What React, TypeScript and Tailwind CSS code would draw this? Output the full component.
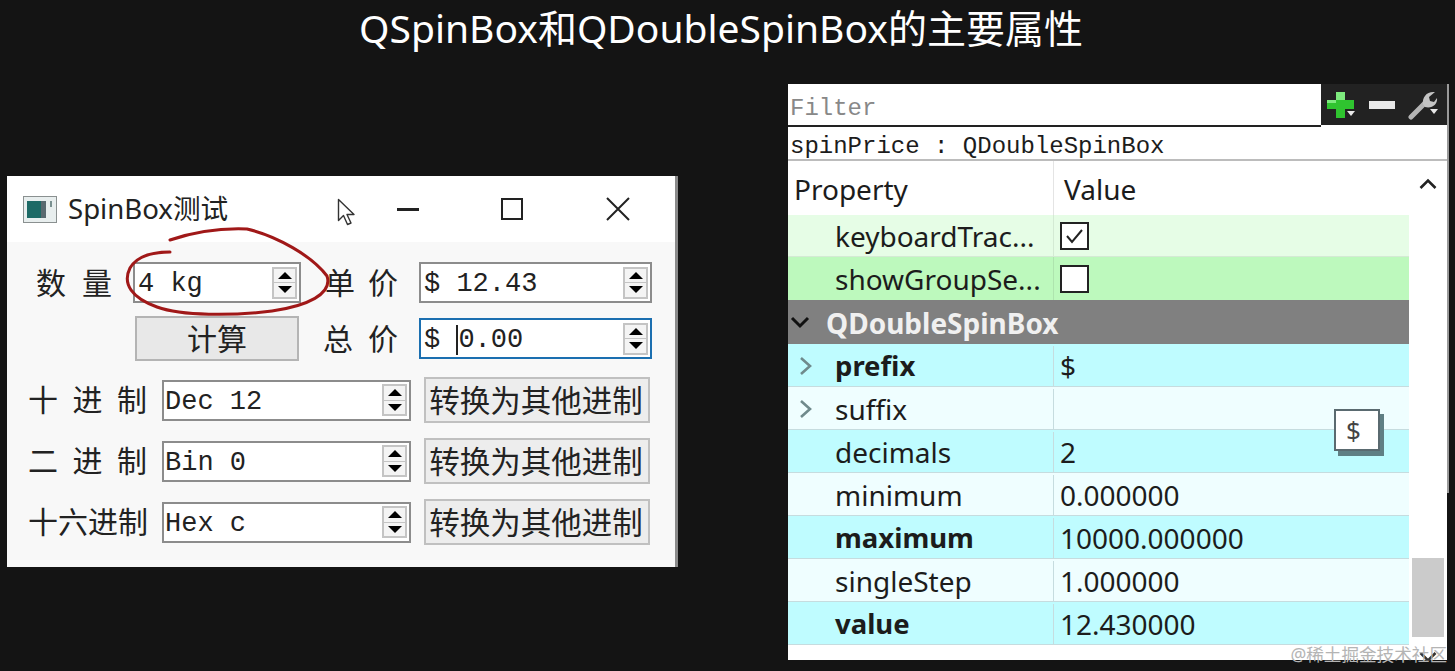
const sans = "font-['Noto_Sans','Noto_Sans_CJK_SC',sans-serif]";
const mono = "font-['Liberation_Mono','Noto_Sans_CJK_SC',monospace]";

type Row = {
  name: string;
  value?: string;
  bold?: boolean;
  arrow?: boolean;
  bg: string;
};

const rows: Row[] = [
  { name: "prefix", value: "$", bold: true, arrow: true, bg: "bg-[#bffcff]" },
  { name: "suffix", arrow: true, bg: "bg-[#effeff]" },
  { name: "decimals", value: "2", bg: "bg-[#bffcff]" },
  { name: "minimum", value: "0.000000", bg: "bg-[#effeff]" },
  { name: "maximum", value: "10000.000000", bold: true, bg: "bg-[#bffcff]" },
  { name: "singleStep", value: "1.000000", bg: "bg-[#effeff]" },
  { name: "value", value: "12.430000", bold: true, bg: "bg-[#bffcff]" },
];

function SpinArrows() {
  return (
    <div className="flex h-[32px] w-[25px] shrink-0 flex-col border-2 border-[#c4c4c4] bg-[#f4f4f4]">
      <div className="flex flex-1 items-center justify-center border-b border-[#c4c4c4]">
        <div className="h-0 w-0 border-x-[7px] border-b-[7px] border-x-transparent border-b-black" />
      </div>
      <div className="flex flex-1 items-center justify-center">
        <div className="h-0 w-0 border-x-[7px] border-t-[7px] border-x-transparent border-t-black" />
      </div>
    </div>
  );
}

function SpinBox({
  text,
  width,
  focused,
  caret,
  tight,
}: {
  text: string;
  width: string;
  focused?: boolean;
  caret?: boolean;
  tight?: boolean;
}) {
  return (
    <div
      className={`flex h-[41px] shrink-0 items-center justify-between border-2 bg-white pr-[2px] ${
        tight ? "pl-[1px]" : "pl-[3px]"
      } ${width} ${focused ? "border-[#1b6fb0]" : "border-[#8c8c8c]"}`}
    >
      <span className={`${mono} mt-[4px] whitespace-pre text-[27px] leading-none text-[#222]`}>
        {caret ? (
          <>
            {"$ "}
            <span className="border-l-2 border-[#222]">0</span>
            {".00"}
          </>
        ) : (
          text
        )}
      </span>
      <SpinArrows />
    </div>
  );
}

function SpacedLabel({ chars, width }: { chars: string[]; width: string }) {
  return (
    <div className={`flex shrink-0 justify-between text-[30px] leading-none text-[#222] ${width}`}>
      {chars.map((c, i) => (
        <span key={i}>{c}</span>
      ))}
    </div>
  );
}

function ConvertRow({ chars, text }: { chars: string[]; text: string }) {
  return (
    <div className="ml-[21px] flex h-[46px] items-center">
      <SpacedLabel chars={chars} width="w-[119px]" />
      <SpinBox text={text} width="ml-[15px] w-[249px]" tight />
      <button className="ml-[13px] h-[46px] w-[226px] whitespace-nowrap border-2 border-[#c0c0c0] bg-[#ededed] pr-[2px] text-[30.5px] leading-none text-[#222]">
        转换为其他进制
      </button>
    </div>
  );
}

function SpinWindow() {
  return (
    <div className={`${sans} relative ml-[7px] mt-[92px] h-[391px] w-[671px] shrink-0 border-r-[3px] border-[#8a8a8a] bg-white`}>
      <div className="flex h-[66px] items-center">
        <svg width="34" height="27" viewBox="0 0 34 27" className="ml-[16px] shrink-0">
          <rect x="0.5" y="0.5" width="33" height="26" fill="#e8eeee" stroke="#8a9090" />
          <rect x="4" y="5" width="14" height="17" fill="#1d6a66" />
          <rect x="18" y="5" width="5" height="17" fill="#5a6a70" />
          <rect x="27" y="5" width="2" height="6" fill="#7a9090" />
        </svg>
        <span className="ml-[11px] w-[262px] shrink-0 text-[27.6px] leading-none text-[#222]">SpinBox测试</span>
        <svg width="20" height="28" viewBox="0 0 20 28" className="ml-[7px] mt-[5px] shrink-0">
          <path d="M1.5 1.5v21l5-5 4 9 3.5-1.5-4-8.5h7z" fill="#fff" stroke="#333" strokeWidth="1.4" strokeLinejoin="round" />
        </svg>
        <div className="ml-[40px] h-[3px] w-[22px] shrink-0 bg-[#222]" />
        <div className="ml-[82px] h-[22px] w-[22px] shrink-0 border-2 border-[#222]" />
        <svg width="24" height="24" viewBox="0 0 24 24" className="ml-[83px] shrink-0">
          <path d="M1 1l22 22M23 1L1 23" stroke="#222" strokeWidth="2" />
        </svg>
      </div>

      <div className="flex h-[325px] flex-col bg-[#f8f8f8] pt-[20px]">
        <div className="flex h-[41px] items-center">
          <SpacedLabel chars={["数", "量"]} width="ml-[29px] w-[76px]" />
          <SpinBox text="4 kg" width="ml-[21px] w-[168px]" />
          <SpacedLabel chars={["单", "价"]} width="ml-[24px] w-[73px]" />
          <SpinBox text="$ 12.43" width="ml-[21px] w-[233px]" />
        </div>
        <div className="mt-[13px] flex h-[45px] items-center">
          <button className="ml-[128px] h-[45px] w-[164px] border-2 border-[#b4b4b4] bg-[#e8e8e8] text-[30px] leading-none text-[#222]">
            计算
          </button>
          <SpacedLabel chars={["总", "价"]} width="ml-[24px] w-[75px]" />
          <SpinBox text="$ 0.00" width="ml-[21px] w-[233px]" focused caret />
        </div>
        <div className="mt-[16px] flex flex-col gap-[15px]">
          <ConvertRow chars={["十", "进", "制"]} text="Dec 12" />
          <ConvertRow chars={["二", "进", "制"]} text="Bin 0" />
          <ConvertRow chars={["十", "六", "进", "制"]} text="Hex c" />
        </div>
      </div>

      {/* hand-drawn red circle around the quantity box */}
      <svg width="670" height="391" viewBox="0 0 670 391" fill="none" className="absolute left-0 top-0">
        <path
          d="M163 64C190 55 215 52 240 53C270 60 305 80 320 100C326 118 300 130 265 135C225 140 175 140 150 131C125 122 115 108 123 92C130 80 145 76 163 76"
          stroke="#a01818"
          strokeWidth="3"
          strokeLinecap="round"
        />
      </svg>
    </div>
  );
}

function ToolIcons() {
  return (
    <div className="flex h-[41px] w-[126px] shrink-0 items-center bg-[#222]">
      <svg width="30" height="28" viewBox="0 0 30 28" className="ml-[6px] shrink-0">
        <path d="M9 1h9v8h9v9h-9v9H9v-9H0V9h9z" fill="#2fc42f" />
        <path d="M9 1h9v8H9zM0 9h9v3H0z" fill="#7eea7e" />
        <path d="M20 20h8l-4 5z" fill="#e8e8e8" />
      </svg>
      <div className="ml-[12px] h-[8px] w-[26px] shrink-0 bg-[#e8e8e8]" />
      <div className="relative ml-[13px] h-[30px] w-[30px] shrink-0">
        <svg width="30" height="30" viewBox="0 0 30 30" fill="none">
          <path d="M3 27L17 13" stroke="#b4b4b4" strokeWidth="5" strokeLinecap="round" />
          <path d="M15 14C14 7 19 1 27 2L21 7l1 4 4 1 3-4c1 6-5 11-12 9z" fill="#c4c4c4" />
        </svg>
        <div className="absolute bottom-[6px] right-0 h-0 w-0 border-x-[4px] border-t-[5px] border-x-transparent border-t-[#e8e8e8]" />
      </div>
    </div>
  );
}

function PropertyPanel() {
  return (
    <div className={`${sans} relative ml-[110px] h-[576px] w-[659px] shrink-0 bg-white text-[#1c1c1c]`}>
      <div className="flex h-[41px]">
        <div className={`${mono} ml-[2px] flex h-[41px] w-[531px] shrink-0 items-center pt-[8px] text-[24px] leading-none text-[#888]`}>Filter</div>
        <ToolIcons />
      </div>
      <div className="h-[2px] w-[533px] bg-[#222]" />
      <div className={`${mono} flex h-[34px] items-center border-b-2 border-[#bcbcbc] pl-[2px] pt-[7px] text-[24px] leading-none`}>
        spinPrice : QDoubleSpinBox
      </div>

      <div className="flex">
        <div className="w-[621px] shrink-0">
          <div className="flex h-[54px] text-[28px] leading-none">
            <div className="flex w-[266px] shrink-0 items-center border-r border-[#e4e4e4] pl-[6px] pt-[2px]">Property</div>
            <div className="flex items-center pl-[10px] pt-[2px]">Value</div>
          </div>
          <div className="flex h-[42px] border-b border-[#d4ead4] bg-[#e6fde6] text-[28px] leading-none">
            <div className="flex w-[266px] shrink-0 items-center border-r border-[#d4ead4] pl-[47px]">keyboardTrac...</div>
            <div className="flex items-center pl-[6px]">
              <div className="flex h-[28px] w-[29px] items-center justify-center border-2 border-[#222] bg-white">
                <svg width="19" height="16" viewBox="0 0 19 16" fill="none">
                  <path d="M2 8l5 6L17 2" stroke="#222" strokeWidth="2" />
                </svg>
              </div>
            </div>
          </div>
          <div className="flex h-[43px] bg-[#bdf9bd] text-[28px] leading-none">
            <div className="flex w-[266px] shrink-0 items-center border-r border-[#aee4ae] pl-[47px]">showGroupSe...</div>
            <div className="flex items-center pl-[6px]">
              <div className="h-[28px] w-[29px] border-2 border-[#222] bg-white" />
            </div>
          </div>
          <div className="flex h-[44px] items-center bg-[#808080] pt-[2px] text-[28px] font-bold leading-none text-[#f0f0f0]">
            <svg width="20" height="14" viewBox="0 0 20 14" fill="none" className="ml-[2px] shrink-0">
              <path d="M2 2l8 8 8-8" stroke="#111" strokeWidth="3" />
            </svg>
            <span className="ml-[16px]">QDoubleSpinBox</span>
          </div>
          {rows.map((r) => (
            <div key={r.name} className={`flex h-[43px] border-b border-[#c6dcdf] pt-[2px] text-[28px] leading-none ${r.bg}`}>
              <div className={`flex w-[266px] shrink-0 items-center border-r border-[#c6dcdf] ${r.bold ? "text-[27.5px] font-bold" : ""}`}>
                <div className="flex w-[47px] shrink-0 justify-center pr-[11px]">
                  {r.arrow && (
                    <svg width="14" height="20" viewBox="0 0 14 20" fill="none">
                      <path d="M2 2l9 8-9 8" stroke="#6f8a8c" strokeWidth="2.6" />
                    </svg>
                  )}
                </div>
                {r.name}
              </div>
              <div className="flex items-center pl-[6px]">{r.value}</div>
            </div>
          ))}
        </div>

        <div className="flex h-[499px] w-[38px] shrink-0 flex-col items-center">
          <svg width="18" height="12" viewBox="0 0 18 12" fill="none" className="mt-[17px] shrink-0">
            <path d="M1.5 10L9 2.5 16.5 10" stroke="#222" strokeWidth="2.6" />
          </svg>
          <div className="mt-[368px] h-[79px] w-[32px] shrink-0 bg-[#cbcbcb]" />
          <svg width="18" height="12" viewBox="0 0 18 12" fill="none" className="mt-[14px] shrink-0">
            <path d="M1.5 2L9 9.5 16.5 2" stroke="#333" strokeWidth="2.6" />
          </svg>
        </div>
      </div>

      {/* tooltip over the table */}
      <div className="absolute left-[546px] top-[325px] flex h-[42px] w-[46px] items-center border-2 border-[#5a6a70] bg-white pl-[10px] text-[26px] leading-none text-[#444] shadow-[4px_5px_0_#5f7f84]">
        $
      </div>
      <div className="absolute right-0 top-[562px] whitespace-nowrap text-[17.6px] leading-none text-[#b4b4b4]">@稀土掘金技术社区</div>
      {/* window edge, only visible on the upper part */}
      <div className="absolute left-[659px] top-0 h-[409px] w-[2px] bg-[#9a9a9a]" />
    </div>
  );
}

export default function App() {
  return (
    <div className={`${sans} h-[671px] w-[1455px] overflow-hidden bg-[#141414]`}>
      <div className="flex h-[84px] justify-center pr-[13px] pt-[7px]">
        <h1 className="whitespace-nowrap text-[39px] font-normal leading-[42px] text-white">QSpinBox和QDoubleSpinBox的主要属性</h1>
      </div>
      <div className="flex items-start">
        <SpinWindow />
        <PropertyPanel />
      </div>
    </div>
  );
}
